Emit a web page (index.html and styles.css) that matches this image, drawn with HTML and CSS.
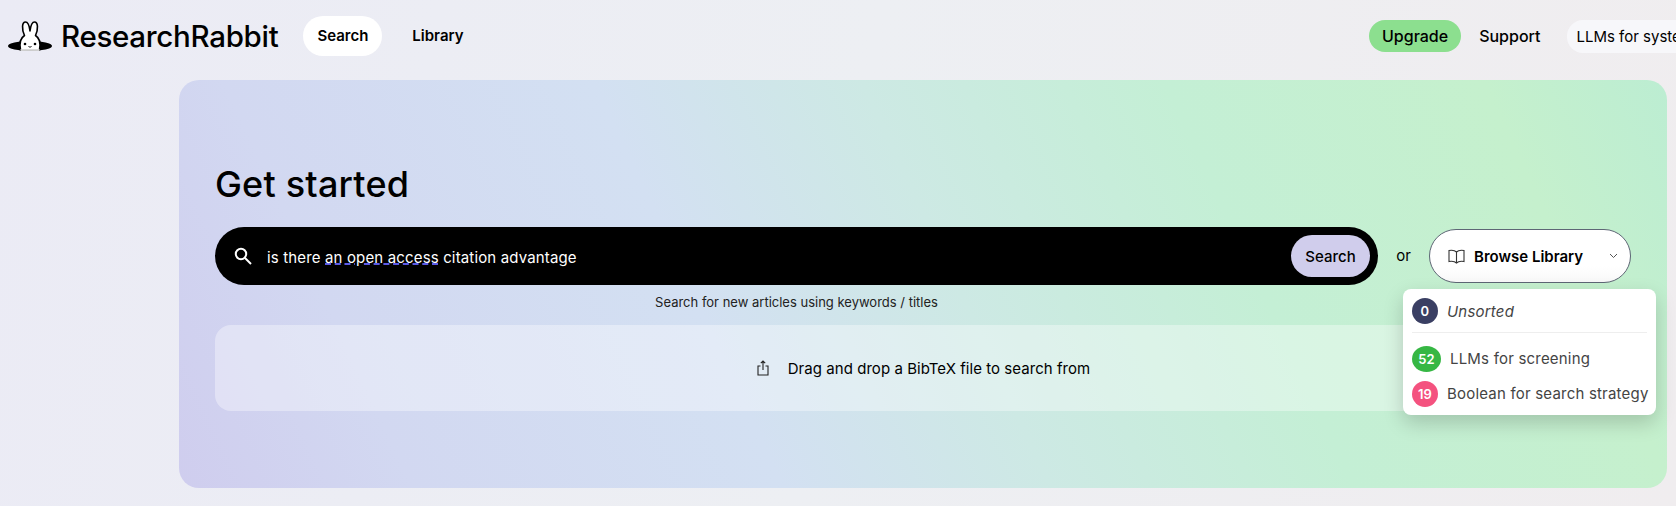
FILE: index.html
```html
<!DOCTYPE html>
<html lang="en">
<head>
  <meta charset="UTF-8">
  <title>ResearchRabbit</title>
  <link rel="stylesheet" href="styles.css">
</head>
<body>

<header class="topbar">
  <div class="brand">
    <svg class="brand-icon" width="44" height="32" viewBox="0 0 44 32">
      <ellipse cx="22" cy="26" rx="22" ry="5" fill="#000"/>
      <path d="M12.500 30 C11 23 12.500 18 16.500 15.500 C13.500 9 14 2 17.500 2 C20.500 2 21.500 7 22 11 C22.500 7 23.500 2 26.500 2 C30 2 30.500 9 27.500 15.500 C31.500 18 33 23 31.500 30 Z" fill="#fff" stroke="#000" stroke-width="1.600" stroke-linejoin="round"/>
      <path d="M12.500 30 H31.500" stroke="#fff" stroke-width="1.600"/>
      <circle cx="17" cy="24" r="1.300" fill="#000"/>
      <circle cx="27" cy="24" r="1.300" fill="#000"/>
      <path d="M20.500 26 L22 27.500 L23.500 26" fill="none" stroke="#000" stroke-width="1"/>
    </svg>
    <span class="brand-name">ResearchRabbit</span>
  </div>
  <nav class="nav">
    <a class="nav-link active">Search</a>
    <a class="nav-link">Library</a>
  </nav>
  <div class="top-right">
    <a class="upgrade">Upgrade</a>
    <a class="support">Support</a>
    <div class="project">LLMs for syste</div>
  </div>
</header>

<main class="card">
  <h1>Get started</h1>
  <div class="search-row">
    <div class="search-col">
      <div class="search-bar">
        <svg class="search-icon" width="18" height="18" viewBox="0 0 18 18" fill="none" stroke="#fff" stroke-width="2">
          <circle cx="7" cy="7" r="5.200"/>
          <path d="M11 11 L17 17"/>
        </svg>
        <span class="query">is there <span class="spell">an open access</span> citation advantage</span>
        <button class="search-btn">Search</button>
      </div>
      <div class="hint">Search for new articles using keywords / titles</div>
    </div>
    <span class="or">or</span>
    <div class="browse-wrap">
      <div class="browse">
        <svg width="17" height="15" viewBox="0 0 17 15" fill="none" stroke="#333" stroke-width="1.100">
          <path d="M8.500 3 C7 1.500 4 1 1 1.500 V12.500 C4 12 7 12.500 8.500 14 C10 12.500 13 12 16 12.500 V1.500 C13 1 10 1.500 8.500 3 Z M8.500 3 V14"/>
        </svg>
        <span class="browse-label">Browse Library</span>
        <svg class="chevron" width="9" height="6" viewBox="0 0 9 6" fill="none" stroke="#555" stroke-width="1">
          <path d="M1 1 L4.500 4.500 L8 1"/>
        </svg>
      </div>
      <div class="menu">
        <div class="menu-item first">
          <span class="badge navy">0</span>
          <em>Unsorted</em>
        </div>
        <div class="menu-item">
          <span class="badge green">52</span>
          <span>LLMs for screening</span>
        </div>
        <div class="menu-item">
          <span class="badge pink">19</span>
          <span>Boolean for search strategy</span>
        </div>
      </div>
    </div>
  </div>
  <div class="drop">
    <svg width="14" height="16" viewBox="0 0 14 16" fill="none" stroke="#222" stroke-width="1.100">
      <path d="M4.500 6 H2 V15 H12 V6 H9.500 M7 10 V1 M4.800 3.200 L7 1 L9.200 3.200"/>
    </svg>
    <span>Drag and drop a BibTeX file to search from</span>
  </div>
</main>

</body>
</html>
```

FILE: styles.css
```css
html, body {
  height: 100%;
  overflow: hidden;
}
body {
  margin: 0;
  background: linear-gradient(100deg, #ebebf5 0%, #edeff3 50%, #f0edef 100%);
  font-family: Inter, "Liberation Sans", sans-serif;
  color: #000;
}
.topbar {
  height: 80px;
  display: flex;
  align-items: center;
  padding-left: 8px;
  padding-bottom: 8px;
  box-sizing: border-box;
  white-space: nowrap;
}
.brand {
  display: flex;
  align-items: center;
  gap: 9px;
}
.brand-name {
  font-size: 29.500px;
  font-weight: 500;
  letter-spacing: -0.3px;
}
.nav {
  display: flex;
  align-items: center;
  gap: 30px;
  margin-left: 25px;
}
.nav-link {
  font-size: 15px;
  font-weight: 600;
  line-height: 40px;
}
.nav-link.active {
  background: #fff;
  border-radius: 20px;
  padding: 0 14px;
}
.top-right {
  display: flex;
  align-items: center;
  margin-left: auto;
  width: 307px;
  flex: none;
}
.upgrade {
  background: #8cdf8f;
  border-radius: 16px;
  line-height: 32px;
  padding: 0 13px;
  font-size: 16px;
  font-weight: 500;
}
.support {
  margin-left: 18px;
  font-size: 16px;
  font-weight: 500;
}
.project {
  margin-left: 27px;
  background: #f7f7fa;
  border-radius: 16px 0 0 16px;
  line-height: 33px;
  padding: 0 0 0 9px;
  flex: 1;
  font-size: 15px;
  font-weight: 400;
  overflow: hidden;
}
.card {
  margin: 0 9px 0 179px;
  height: 408px;
  box-sizing: border-box;
  padding: 81px 36px 0;
  border-radius: 20px;
  background: linear-gradient(65deg, #cfcdee 0%, #d2d8f1 14%, #d3e0f2 36%, #cde9e4 52%, #c4efd5 70%, #c5f0cd 89%, #bcedd2 100%);
}
h1 {
  margin: 0 0 20px;
  font-size: 36px;
  font-weight: 500;
  line-height: 46px;
  letter-spacing: 0.2px;
}
.search-row {
  display: flex;
  align-items: flex-start;
}
.search-col {
  width: 1163px;
  flex: none;
}
.search-bar {
  height: 58px;
  background: #000;
  border-radius: 29px;
  display: flex;
  align-items: center;
  padding: 0 8px 0 19px;
  color: #fff;
}
.search-icon {
  flex: none;
}
.query {
  margin-left: 15px;
  padding-top: 2px;
  font-size: 15px;
  letter-spacing: 0.15px;
}
.spell {
  text-decoration: underline dashed #5a5ae6 1.5px;
}
.search-btn {
  margin-left: auto;
  height: 42px;
  width: 79px;
  border: none;
  border-radius: 21px;
  background: #d0cdec;
  font-family: inherit;
  font-size: 15px;
  font-weight: 500;
  color: #000;
}
.hint {
  margin-top: 9px;
  text-align: center;
  font-size: 13px;
  color: #222;
  line-height: 16px;
}
.or {
  width: 51px;
  text-align: center;
  line-height: 58px;
  font-size: 15px;
  flex: none;
}
.browse-wrap {
  position: relative;
  margin-top: 2px;
  flex: none;
}
.browse {
  width: 202px;
  height: 54px;
  box-sizing: border-box;
  background: linear-gradient(#fff 70%, #f8f8f8);
  border: 1px solid #5e6675;
  border-radius: 27px;
  display: flex;
  align-items: center;
  padding: 0 12px 0 18px;
}
.browse-label {
  margin-left: 9px;
  font-size: 15px;
  font-weight: 600;
}
.chevron {
  margin-left: auto;
}
.menu {
  position: absolute;
  top: 60px;
  left: -26px;
  width: 253px;
  height: 126px;
  box-sizing: border-box;
  padding: 9px 9px 0;
  background: #fff;
  border-radius: 8px;
  box-shadow: 0 8px 20px rgba(0, 0, 0, 0.18);
  font-size: 15px;
  letter-spacing: 0.2px;
  color: #444;
  z-index: 2;
}
.menu-item {
  display: flex;
  align-items: center;
  gap: 9px;
  height: 27px;
  margin-bottom: 8px;
  white-space: nowrap;
}
.menu-item.first {
  padding-bottom: 8px;
  margin-bottom: 12px;
  height: 26px;
  box-sizing: content-box;
  border-bottom: 1px solid #eee;
}
.badge {
  width: 26px;
  height: 26px;
  border-radius: 50%;
  flex: none;
  display: flex;
  align-items: center;
  justify-content: center;
  color: #fff;
  font-size: 13px;
  font-weight: 600;
}
.navy { background: #3a3f63; }
.green { background: #36b744; width: 29px; }
.pink { background: #f4527f; }
.drop {
  margin-top: 15px;
  height: 86px;
  border-radius: 16px;
  background: rgba(255, 255, 255, 0.36);
  display: flex;
  align-items: center;
  justify-content: center;
  gap: 18px;
  font-size: 15px;
  font-weight: 400;
  letter-spacing: 0.05px;
}
```
